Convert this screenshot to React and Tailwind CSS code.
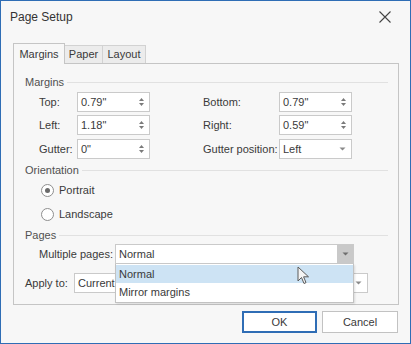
import React from 'react';

const FONT = 'font-["Liberation_Sans",Arial,sans-serif]';

// tiny spin arrows of the numeric editors
function Spin() {
  return (
    <svg width="7" height="14" viewBox="0 0 7 14" className="shrink-0">
      <path d="M3.5 3 L6 6 L1 6 Z" fill="#7a7a7a" />
      <path d="M1 8 L6 8 L3.5 11 Z" fill="#7a7a7a" />
    </svg>
  );
}

function DropArrow({ color = '#8a8a8a' }) {
  return (
    <svg width="7" height="4" viewBox="0 0 7 4" className="shrink-0">
      <path d="M0.5 0.5 L6.5 0.5 L3.5 3.5 Z" fill={color} />
    </svg>
  );
}

function SpinEdit({ value }) {
  return (
    <div className="w-[73px] h-[20px] bg-white border border-[#cacaca] flex items-center pl-[3px] pr-[4px]">
      <span className="flex-1">{value}</span>
      <Spin />
    </div>
  );
}

function GroupHeader({ title }) {
  return (
    <div className="h-[14px] flex items-center pl-[11px] pr-[10px] gap-[3px]">
      <span className="text-[#505050]">{title}</span>
      <div className="flex-1 h-px bg-[#e1e1e1]" />
    </div>
  );
}

function Radio({ checked, label }) {
  return (
    <div className="h-[20px] flex items-center pl-[27px] gap-[5px]">
      <div className="w-[13px] h-[13px] rounded-full border border-[#8e8e8e] bg-white flex items-center justify-center">
        {checked && <div className="w-[5px] h-[5px] rounded-full bg-[#6a6a6a]" />}
      </div>
      <span>{label}</span>
    </div>
  );
}

export default function App() {
  return (
    <div className={`w-[411px] h-[344px] bg-[#f7f7f7] border border-[#2f6db5] flex flex-col text-[11px] text-[#3a3a3a] ${FONT}`}>
      {/* Title bar */}
      <div className="h-[31px] flex items-center justify-between pl-[9px] pr-[19px]">
        <span className="text-[12px] text-[#333]">Page Setup</span>
        <svg width="12" height="12" viewBox="0 0 12 12">
          <path d="M0.5 0.5 L11.5 11.5 M11.5 0.5 L0.5 11.5" stroke="#444" strokeWidth="1.1" />
        </svg>
      </div>

      {/* Tabs */}
      <div className="mt-[10px] ml-[12px] flex items-end">
        <div className="w-[52px] h-[21px] border border-b-0 border-[#c5c5c5] bg-[#f7f7f7] flex items-center justify-center relative top-px z-10">
          Margins
        </div>
        <div className="w-[38px] h-[18px] border border-l-0 border-b-0 border-[#d2d2d2] bg-[#ececec] flex items-center justify-center">
          Paper
        </div>
        <div className="w-[43px] h-[18px] border border-l-0 border-b-0 border-[#d2d2d2] bg-[#ececec] flex items-center justify-center">
          Layout
        </div>
      </div>

      {/* Tab page */}
      <div className="ml-[12px] w-[386px] h-[242px] border border-[#c5c5c5] bg-[#f7f7f7] pt-[11px] flex flex-col">
        <GroupHeader title="Margins" />

        <div className="mt-[3px] flex items-center pl-[25px]">
          <span className="w-[38px]">Top:</span>
          <SpinEdit value='0.79"' />
          <span className="w-[53px]" />
          <span className="w-[76px]">Bottom:</span>
          <SpinEdit value='0.79"' />
        </div>
        <div className="mt-[3px] flex items-center pl-[25px]">
          <span className="w-[38px]">Left:</span>
          <SpinEdit value='1.18"' />
          <span className="w-[53px]" />
          <span className="w-[76px]">Right:</span>
          <SpinEdit value='0.59"' />
        </div>
        <div className="mt-[4px] flex items-center pl-[25px]">
          <span className="w-[38px]">Gutter:</span>
          <SpinEdit value='0"' />
          <span className="w-[53px]" />
          <span className="w-[76px]">Gutter position:</span>
          <div className="w-[73px] h-[20px] bg-white border border-[#cacaca] flex items-center pl-[3px] pr-[5px]">
            <span className="flex-1">Left</span>
            <DropArrow />
          </div>
        </div>

        <div className="mt-[4px]">
          <GroupHeader title="Orientation" />
        </div>
        <div className="mt-[3px]">
          <Radio checked label="Portrait" />
        </div>
        <div className="mt-[4px]">
          <Radio label="Landscape" />
        </div>

        <div className="mt-[4px]">
          <GroupHeader title="Pages" />
        </div>
        <div className="mt-[2px] flex items-center pl-[25px] relative z-20">
          <span className="w-[76px]">Multiple pages:</span>
          <div className="relative w-[239px]">
            <div className="h-[20px] bg-white border border-[#cacaca] flex items-center pl-[3px]">
              <span className="flex-1">Normal</span>
              <div className="w-[16px] h-full bg-[#c9c9c9] flex items-center justify-center">
                <DropArrow color="#6e6e6e" />
              </div>
            </div>
            {/* open drop-down list */}
            <div className="absolute left-0 top-full w-full h-[39px] bg-white border border-t-0 border-[#c2c2c2] shadow-[1px_1px_2px_rgba(0,0,0,0.12)] flex flex-col pt-px">
              <div className="h-[18px] bg-[#cde3f4] flex items-center pl-[3px]">Normal</div>
              <div className="h-[18px] flex items-center pl-[3px]">Mirror margins</div>
            </div>
            {/* mouse pointer */}
            <svg className="absolute left-[182px] top-[22px]" width="13" height="19" viewBox="0 0 13 19">
              <path
                d="M1 1 L1 15 L4.5 11.5 L7 17.5 L9 16.6 L6.6 10.8 L11.5 10.8 Z"
                fill="#f4f4f4"
                stroke="#5a5a5a"
                strokeWidth="1"
                strokeLinejoin="round"
              />
            </svg>
          </div>
        </div>

        <div className="mt-[9px] flex items-center pl-[11px]">
          <span className="w-[49px]">Apply to:</span>
          <div className="w-[294px] h-[20px] bg-white border border-[#cacaca] flex items-center pl-[3px] pr-[5px]">
            <span className="flex-1">Current</span>
            <DropArrow />
          </div>
        </div>
      </div>

      {/* Buttons */}
      <div className="mt-[6px] flex justify-end gap-[5px] pr-[12px]">
        <button className="w-[75px] h-[22px] border-2 border-[#2f6db5] bg-white flex items-center justify-center text-[#3a3a3a]">
          OK
        </button>
        <button className="w-[76px] h-[22px] border border-[#c2c2c2] bg-white flex items-center justify-center text-[#3a3a3a]">
          Cancel
        </button>
      </div>
    </div>
  );
}
